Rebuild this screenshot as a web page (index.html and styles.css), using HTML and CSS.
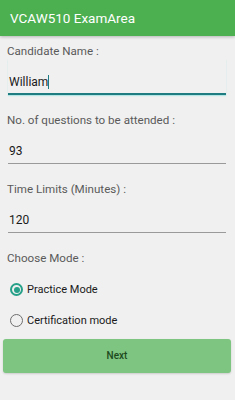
FILE: index.html
```html
<!DOCTYPE html>
<html lang="en">
<head>
    <meta charset="UTF-8">
    <meta name="viewport" content="width=device-width, initial-scale=1.0">
    <title>VCAW510 ExamArea</title>
    <link rel="stylesheet" href="styles.css">
</head>
<body>

    <div class="app-bar">VCAW510 ExamArea</div>

    <div class="form">
        <div class="field">
            <div class="field-label">Candidate Name :</div>
            <div class="field-input focused">William<span class="caret"></span></div>
        </div>

        <div class="field">
            <div class="field-label">No. of questions to be attended :</div>
            <div class="field-input">93</div>
        </div>

        <div class="field">
            <div class="field-label">Time Limits (Minutes) :</div>
            <div class="field-input">120</div>
        </div>

        <div class="field-label">Choose Mode :</div>

        <div class="radio-group">
            <div class="radio-row">
                <span class="radio checked"></span>
                <span class="radio-text">Practice Mode</span>
            </div>
            <div class="radio-row">
                <span class="radio"></span>
                <span class="radio-text">Certification mode</span>
            </div>
        </div>

        <div class="next-button">Next</div>
    </div>

</body>
</html>
```

FILE: styles.css
```css
body {
    margin: 0;
    height: 400px;
    overflow: hidden;
    background-color: #f0f0f0;
    font-family: Roboto, "Liberation Sans", sans-serif;
}

.app-bar {
    height: 36px;
    line-height: 36px;
    padding-left: 10px;
    background-color: #4caf50;
    color: #ffffff;
    font-size: 13.5px;
    box-shadow: 0 1px 3px rgba(0, 0, 0, 0.25);
}

.form {
    padding: 7px 9px 0 7px;
}

.field {
    margin-bottom: 17px;
}

.field-label {
    height: 16px;
    line-height: 16px;
    font-size: 11.6px;
    color: #5a5a5a;
}

.field-input {
    margin: 0 0 0 1px;
    padding: 15px 0 4px 1px;
    height: 16px;
    line-height: 16px;
    font-size: 12px;
    color: #1a1a1a;
    border-bottom: 1px solid #9a9a9a;
}

.field-input.focused {
    border-bottom: 2px solid #1f7c80;
    padding-bottom: 3px;
    box-shadow: 0 1px 1px rgba(120, 220, 220, 0.5);
}

.caret {
    display: inline-block;
    width: 1px;
    height: 14px;
    vertical-align: -3px;
    background-color: #1f7c80;
}

.radio-group {
    margin-top: 8px;
}

.radio-row {
    display: flex;
    align-items: center;
    height: 31px;
    padding-left: 3px;
}

.radio {
    box-sizing: border-box;
    width: 13px;
    height: 13px;
    border-radius: 50%;
    border: 1.5px solid #6d6d6d;
    margin-right: 4px;
    display: flex;
    align-items: center;
    justify-content: center;
}

.radio.checked {
    border: 2px solid #26a088;
}

.radio.checked::after {
    content: '';
    width: 6px;
    height: 6px;
    border-radius: 50%;
    background-color: #26a088;
}

.radio-text {
    font-size: 11px;
    color: #1a1a1a;
}

.next-button {
    margin: 3px -5px 0 -4px;
    height: 34px;
    line-height: 34px;
    border-radius: 3px;
    background-color: #7dc581;
    color: #1d4a1d;
    font-size: 10px;
    font-weight: 500;
    text-align: center;
    box-shadow: 0 1px 2px rgba(0, 0, 0, 0.15);
}
```
